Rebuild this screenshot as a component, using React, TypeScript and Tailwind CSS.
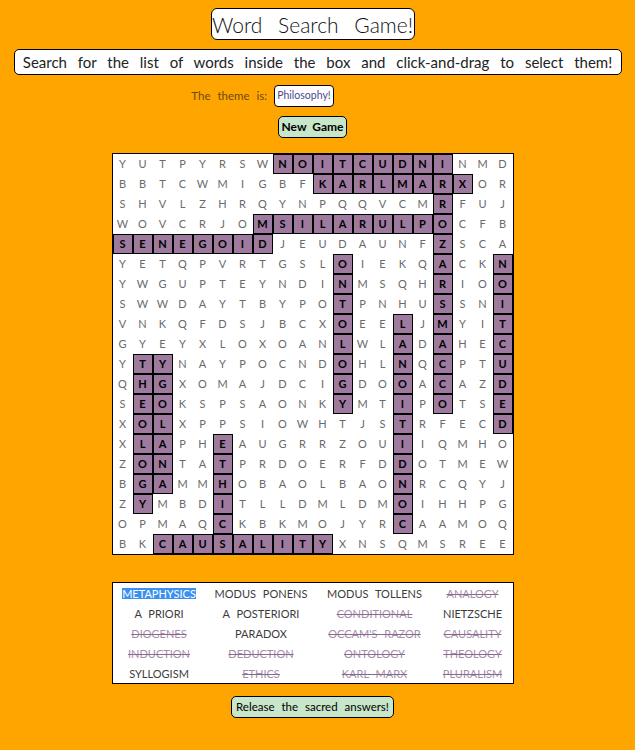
import React from "react";

const ROWS = [
  "YUTPYRSWNOITCUDNINMD",
  "BBTCWMIGBFKARLMARXOR",
  "SHVLZHRQYNPQQVCMRFUJ",
  "WOVCRJOMSILARULPOCFB",
  "SENEGOIDJEUDAUNFZSCA",
  "YETQPVRTGSLOIEKQACKN",
  "YWGUPTEYNDINMSQHRIOO",
  "SWWDAYTBYPOTPNHUSSNI",
  "VNKQFDSJBCXOEELJMYIT",
  "GYEYXLOXOANLWLADAHEC",
  "YTYNAYPOCNDOHLNQCPTU",
  "QHGXOMAJDCIGDOOACAZD",
  "SEOKSPSAONKYMTIPOTSE",
  "XOLXPPSIOWHTJSTRFECD",
  "XLAPHEAUGRRZOUIIQMHO",
  "ZONTATPRDOERFDDOTMEW",
  "BGAMMHOBAOLBAONRCQYJ",
  "ZYMBDITLLDMLDMOIHHPG",
  "OPMAQCKBKMOJYRCAAMOQ",
  "BKCAUSALITYXNSQMSREE",
];

const HL = new Set<string>();
const add = (r: number, c: number) => HL.add(`${r}-${c}`);
for (let c = 9; c <= 17; c++) add(1, c);
for (let c = 11; c <= 18; c++) add(2, c);
for (let c = 8; c <= 16; c++) add(4, c);
for (let c = 1; c <= 8; c++) add(5, c);
for (let r = 3; r <= 13; r++) add(r, 17);
for (let r = 6; r <= 13; r++) add(r, 12);
for (let r = 9; r <= 19; r++) add(r, 15);
for (let r = 6; r <= 14; r++) add(r, 20);
for (let r = 11; r <= 18; r++) add(r, 2);
for (let r = 11; r <= 17; r++) add(r, 3);
for (let r = 15; r <= 20; r++) add(r, 6);
for (let c = 3; c <= 11; c++) add(20, c);

type W = { t: string; s?: boolean; sel?: boolean };
const WORDS: W[][] = [
  [{ t: "METAPHYSICS", sel: true }, { t: "MODUS PONENS" }, { t: "MODUS TOLLENS" }, { t: "ANALOGY", s: true }],
  [{ t: "A PRIORI" }, { t: "A POSTERIORI" }, { t: "CONDITIONAL", s: true }, { t: "NIETZSCHE" }],
  [{ t: "DIOGENES", s: true }, { t: "PARADOX" }, { t: "OCCAM'S RAZOR", s: true }, { t: "CAUSALITY", s: true }],
  [{ t: "INDUCTION", s: true }, { t: "DEDUCTION", s: true }, { t: "ONTOLOGY", s: true }, { t: "THEOLOGY", s: true }],
  [{ t: "SYLLOGISM" }, { t: "ETHICS", s: true }, { t: "KARL MARX", s: true }, { t: "PLURALISM", s: true }],
];

export default function App() {
  return (
    <div className="min-h-[750px] w-full bg-[#FFA500] font-['Lato','Noto_Sans',sans-serif]">
      <div className="w-[625px] flex flex-col items-center pt-[8px]">
        <div className="h-[32px] w-[204px] flex items-center justify-center whitespace-nowrap bg-white border border-black rounded-[6px] text-[21px] font-light text-[#111] [word-spacing:10px] leading-none">
          Word Search Game!
        </div>
        <div className="mt-[9px] ml-[10px] h-[26px] w-[608px] flex items-center justify-center whitespace-nowrap bg-white border border-black rounded-[5px] text-[15px] text-[#222] [word-spacing:7px] leading-none">
          Search for the list of words inside the box and click-and-drag to select them!
        </div>
        <div className="mt-[10px] mr-[100px] flex items-center whitespace-nowrap">
          <span className="text-[11.5px] text-[#6e4a12] [word-spacing:4px]">The theme is:</span>
          <span className="ml-[7px] h-[22px] px-[2px] flex items-center justify-center bg-white border border-black rounded-[4px] text-[10.5px] text-[#4a4a8a]">
            Philosophy!
          </span>
        </div>
        <button className="mt-[9px] h-[22px] w-[69px] flex items-center justify-center whitespace-nowrap bg-[#c8e6c9] border border-black rounded-[5px] text-[12px] font-bold text-black [word-spacing:3px]">
          New Game
        </button>
        <div className="mt-[15px] grid grid-cols-[repeat(20,20px)] bg-white border border-black">
          {ROWS.map((row, r) =>
            row.split("").map((ch, c) => {
              const hl = HL.has(`${r + 1}-${c + 1}`);
              return (
                <div
                  key={`${r}-${c}`}
                  className={
                    hl
                      ? "h-[20px] w-[20px] flex items-center justify-center bg-[#9e7a9e] border border-black text-[11px] font-bold text-black"
                      : "h-[20px] w-[20px] flex items-center justify-center text-[11px] text-[#6a6a6a]"
                  }
                >
                  {ch}
                </div>
              );
            })
          )}
        </div>
        <div className="mt-[27px] w-[402px] bg-white border border-black grid grid-cols-[93px_111px_116px_80px]">
          {WORDS.map((row, r) =>
            row.map((w, c) => (
              <div key={`${r}-${c}`} className="h-[20px] flex items-center justify-center whitespace-nowrap text-[11px] [word-spacing:4px] leading-none">
                {w.sel ? (
                  <span className="bg-[#3a8ff0] text-white">{w.t}</span>
                ) : w.s ? (
                  <span className="text-[#a58fa8] line-through decoration-[#8a6a8e]">{w.t}</span>
                ) : (
                  <span className="text-[#3c3c3c]">{w.t}</span>
                )}
              </div>
            ))
          )}
        </div>
        <button className="mt-[12px] h-[22px] w-[163px] flex items-center justify-center whitespace-nowrap bg-[#c8e6c9] border border-black rounded-[5px] text-[11.5px] text-black [word-spacing:4px]">
          Release the sacred answers!
        </button>
      </div>
    </div>
  );
}
